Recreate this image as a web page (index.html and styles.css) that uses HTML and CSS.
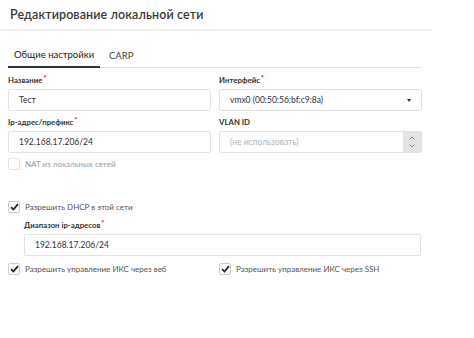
FILE: index.html
```html
<!DOCTYPE html>
<html lang="ru">
<head>
    <meta charset="UTF-8">
    <title>Редактирование локальной сети</title>
    <link rel="stylesheet" href="styles.css">
</head>
<body>
    <div class="dialog">
        <header class="dialog-header">
            <h1>Редактирование локальной сети</h1>
        </header>

        <div class="dialog-body">
            <nav class="tabs">
                <a href="#" class="tab active">Общие настройки</a>
                <a href="#" class="tab">CARP</a>
            </nav>

            <div class="form-grid">
                <div class="field">
                    <label>Название<span class="req">*</span></label>
                    <div class="input">Тест</div>
                </div>
                <div class="field">
                    <label>Интерфейс<span class="req">*</span></label>
                    <div class="input select">
                        <span>vmx0 (00:50:56:bf:c9:8a)</span>
                        <span class="caret"></span>
                    </div>
                </div>
                <div class="field">
                    <label>Ip-адрес/префикс<span class="req">*</span></label>
                    <div class="input">192.168.17.206/24</div>
                </div>
                <div class="field">
                    <label>VLAN ID</label>
                    <div class="input number">
                        <span class="placeholder">(не использовать)</span>
                        <span class="spinner">
                            <svg width="8" height="16" viewBox="0 0 8 16"><path d="M1.5 5.5 4 3l2.5 2.5M1.5 10.5 4 13l2.5-2.5" fill="none" stroke="#8a8a8a" stroke-width="1"/></svg>
                        </span>
                    </div>
                </div>
            </div>

            <div class="check disabled">
                <span class="box"></span>
                <span>NAT из локальных сетей</span>
            </div>

            <div class="check dhcp">
                <span class="box checked"><svg width="9" height="8" viewBox="0 0 9 8"><path d="M1 4.2 3.4 6.5 8 1.2" fill="none" stroke="#222" stroke-width="1.8"/></svg></span>
                <span>Разрешить DHCP в этой сети</span>
            </div>

            <div class="field nested">
                <label>Диапазон ip-адресов<span class="req">*</span></label>
                <div class="input">192.168.17.206/24</div>
            </div>

            <div class="check-row">
                <div class="check">
                    <span class="box checked"><svg width="9" height="8" viewBox="0 0 9 8"><path d="M1 4.2 3.4 6.5 8 1.2" fill="none" stroke="#222" stroke-width="1.8"/></svg></span>
                    <span>Разрешить управление ИКС через веб</span>
                </div>
                <div class="check">
                    <span class="box checked"><svg width="9" height="8" viewBox="0 0 9 8"><path d="M1 4.2 3.4 6.5 8 1.2" fill="none" stroke="#222" stroke-width="1.8"/></svg></span>
                    <span>Разрешить управление ИКС через SSH</span>
                </div>
            </div>
        </div>
    </div>
</body>
</html>
```

FILE: styles.css
```css
body {
    margin: 0;
    padding: 0;
    background-color: #fff;
    font-family: Lato, 'Open Sans', sans-serif;
    color: #333;
}
.dialog {
    width: 432px;
}
.dialog-header {
    height: 29px;
    border-bottom: 2px solid #f0f0f0;
    padding: 0 10px;
    display: flex;
    align-items: center;
}
.dialog-header h1 {
    margin: 0;
    font-size: 12.5px;
    font-weight: 600;
    color: #3a3a3a;
    letter-spacing: 0.1px;
}
.dialog-body {
    padding: 12px 11px 0 8px;
}
.tabs {
    display: flex;
    height: 24px;
    border-bottom: 1px solid #e2e2e2;
    margin-bottom: 8px;
}
.tab {
    display: flex;
    align-items: center;
    padding: 0 9px;
    font-size: 9.5px;
    color: #444;
    text-decoration: none;
    white-space: nowrap;
}
.tab.active {
    border-bottom: 2px solid #333;
    margin-bottom: -1px;
    width: 92px;
    box-sizing: border-box;
    justify-content: center;
    color: #222;
}
.form-grid {
    display: grid;
    grid-template-columns: 203px 203px;
    column-gap: 8px;
    row-gap: 7px;
}
.field label {
    display: block;
    font-size: 7.8px;
    font-weight: 700;
    color: #333;
    margin-bottom: 4px;
    line-height: 9px;
}
.req {
    color: #d0021b;
    margin-left: 1px;
    position: relative;
    top: -2px;
    font-size: 7px;
}
.input {
    height: 20px;
    border: 1px solid #e3e3e3;
    border-radius: 2px;
    display: flex;
    align-items: center;
    padding: 0 10px;
    font-size: 8.5px;
    color: #333;
}
.select {
    justify-content: space-between;
    padding-right: 10px;
}
.caret {
    width: 0;
    height: 0;
    border-left: 2.5px solid transparent;
    border-right: 2.5px solid transparent;
    border-top: 3px solid #333;
}
.number {
    padding-right: 0;
    justify-content: space-between;
}
.placeholder {
    color: #b5b5b5;
}
.spinner {
    width: 18px;
    height: 100%;
    background-color: #e4e4e4;
    display: flex;
    align-items: center;
    justify-content: center;
}
.check {
    display: flex;
    align-items: center;
    gap: 5px;
    font-size: 8px;
    color: #555;
}
.check .box {
    width: 10px;
    height: 10px;
    border: 1px solid #ccc;
    border-radius: 2px;
    display: flex;
    align-items: center;
    justify-content: center;
}
.check.disabled {
    color: #9a9a9a;
    margin-top: 5px;
}
.check.disabled .box {
    border-color: #e0e0e0;
}
.check.dhcp {
    margin-top: 31px;
}
.field.nested {
    margin: 8px 0 0 16px;
}
.check-row {
    display: grid;
    grid-template-columns: 211px 203px;
    margin-top: 7px;
}
```
